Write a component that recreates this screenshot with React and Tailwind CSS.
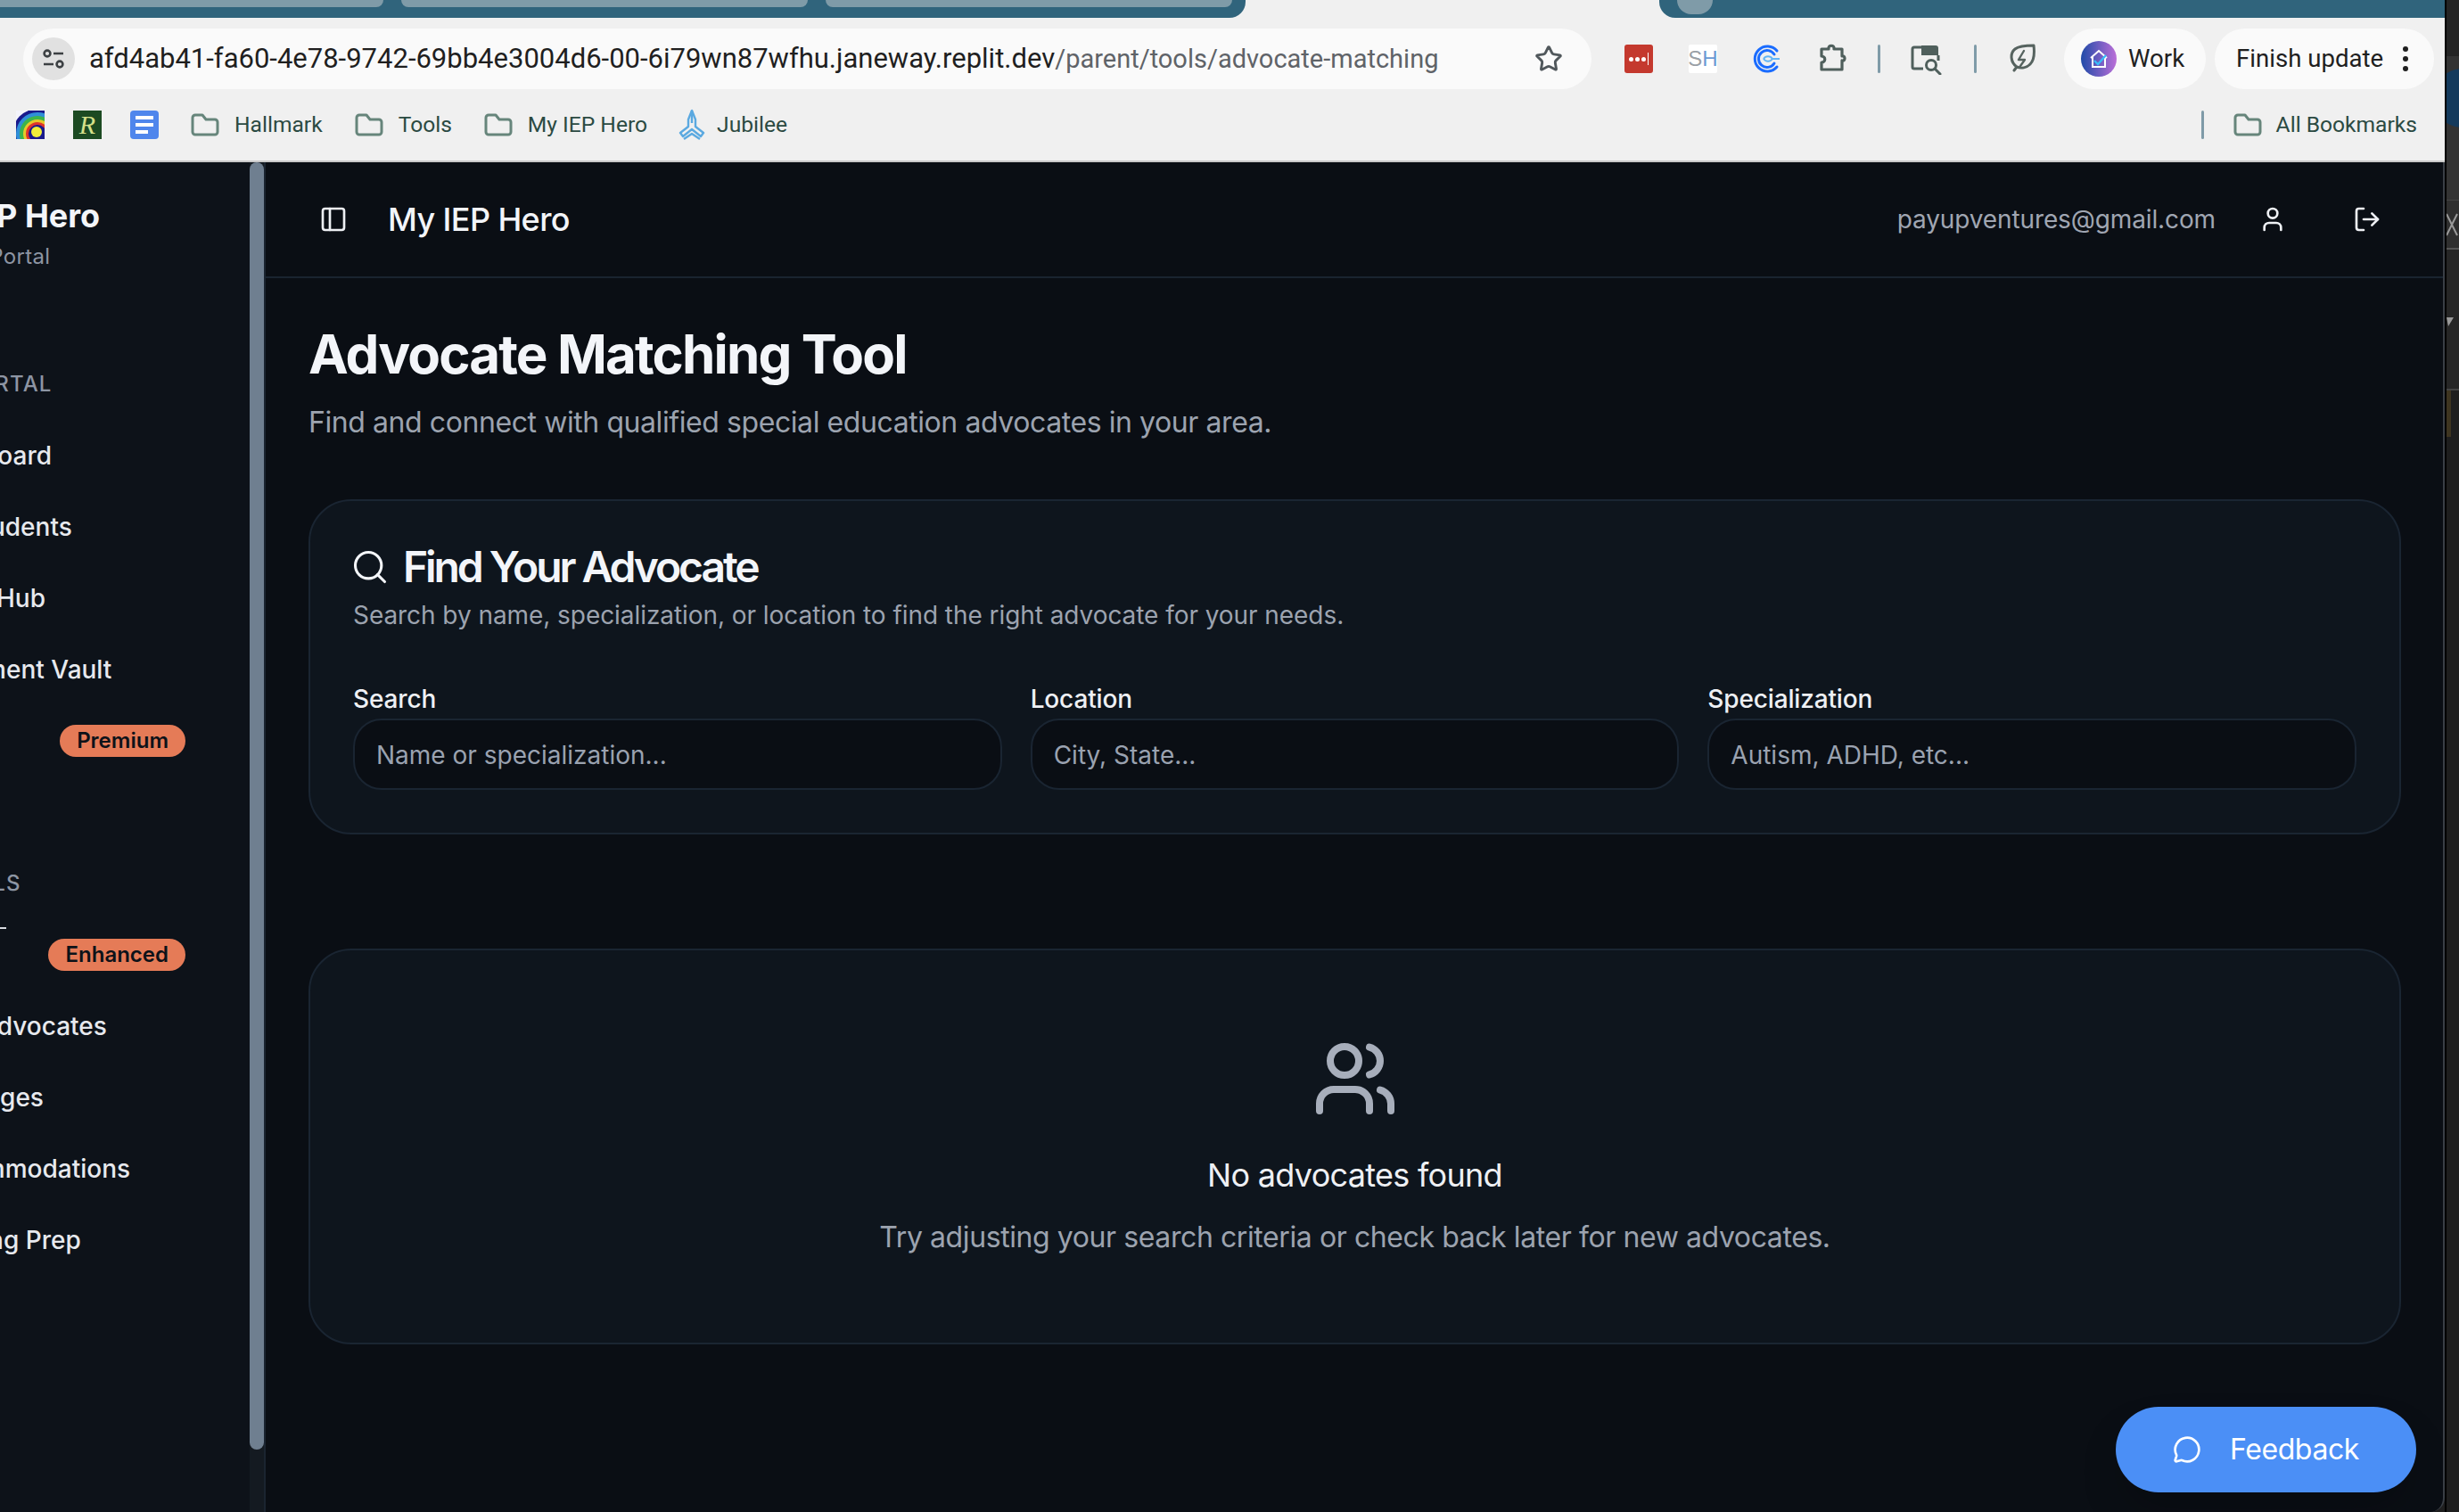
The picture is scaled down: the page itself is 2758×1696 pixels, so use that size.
import React from "react";
import { Search, Users, User, LogOut, PanelLeft, MessageCircle, Star } from "lucide-react";

const Folder = ({ className = "" }) => (
  <svg viewBox="0 0 32 26" className={`w-[32px] h-[26px] ${className}`} fill="none" stroke="#66857b" strokeWidth="3" strokeLinejoin="round">
    <path d="M2 5a3 3 0 0 1 3-3h8l4 5h10a3 3 0 0 1 3 3v11a3 3 0 0 1-3 3H5a3 3 0 0 1-3-3Z" />
  </svg>
);

const Rainbow = () => (
  <svg viewBox="0 0 32 32" className="w-[32px] h-[32px]">
    <rect width="32" height="32" fill="#f4f4fb" />
    <circle cx="24" cy="26" r="28" fill="#1a1a8c" />
    <circle cx="24" cy="26" r="24" fill="#2f8fd8" />
    <circle cx="24" cy="26" r="20" fill="#3db44a" />
    <circle cx="24" cy="26" r="16" fill="#e8c92a" />
    <circle cx="24" cy="26" r="13" fill="#e0342b" />
    <circle cx="24" cy="26" r="10" fill="#1a1a8c" />
    <circle cx="23" cy="24" r="6" fill="#f2ee3a" />
  </svg>
);

const Docs = () => (
  <div className="w-[32px] h-[32px] bg-[#4f86ec] rounded-[4px] flex flex-col justify-center gap-[4px] px-[6px]">
    <div className="h-[4px] w-full bg-white" />
    <div className="h-[4px] w-full bg-white" />
    <div className="h-[4px] w-[14px] bg-white" />
  </div>
);

const Sep = ({ className = "" }) => <div className={`w-[3px] h-[32px] rounded-full bg-[#7f9ba8] ${className}`} />;

const Bookmark = ({ label, className = "" }) => (
  <div className={`flex items-center gap-[17px] ${className}`}>
    <Folder />
    <span>{label}</span>
  </div>
);

const NavRow = ({ label, badge, dash }) => (
  <div className="h-[80px] flex items-center justify-between text-[28px] font-medium text-[#e7e9ee]">
    {dash ? <div className="self-start mt-[9px] ml-[88px] h-[2px] w-[7px] bg-[#d8dbe0]" /> : null}
    <span className="whitespace-nowrap">{label}</span>
    {badge ? (
      <span className="rounded-full bg-[#e57b57] text-[#0d1219] text-[24px] leading-[36px] font-semibold px-[19px]">{badge}</span>
    ) : null}
  </div>
);

const Field = ({ label, placeholder }) => (
  <div className="flex flex-col gap-[8px]">
    <label className="text-[28px] leading-[28px] font-medium tracking-[-0.15px] text-[#eef0f4]">{label}</label>
    <div className="h-[80px] rounded-[32px] border-2 border-[#1a2532] bg-[#0a0e14] flex items-center pt-[2px] px-[24px] text-[28px] text-[#9aa2b0]">
      {placeholder}
    </div>
  </div>
);

export default function App() {
  return (
    <div className="w-[2758px] h-[1696px] flex overflow-hidden bg-[#1f1f1f] font-['Inter',sans-serif]">
      <div className="w-[2742px] h-full flex flex-col shrink-0">
        {/* Browser chrome */}
        <div className="h-[182px] shrink-0 bg-[#f0f0f0] border-b-2 border-[#c9c9c9] flex flex-col font-['Roboto',sans-serif]">
          <div className="h-[20px] flex">
            <div className="w-[1397px] h-full bg-[#30647c] rounded-br-[18px] flex gap-[20px]">
              <div className="w-[430px] h-[8px] bg-[#7f9ba8] rounded-br-[12px]" />
              <div className="w-[456px] h-[8px] bg-[#7f9ba8] rounded-b-[12px]" />
              <div className="w-[456px] h-[8px] bg-[#7f9ba8] rounded-b-[12px]" />
            </div>
            <div className="w-[464px] h-full" />
            <div className="flex-1 h-full bg-[#30647c] rounded-bl-[18px] pl-[20px]">
              <div className="w-[40px] h-[16px] bg-[#7f9ba8] rounded-b-full" />
            </div>
          </div>
          <div className="h-[80px] pt-[12px] pl-[26px] flex items-start">
            <div className="w-[1759px] h-[68px] rounded-full bg-[#fafafa] flex items-center pl-[10px] pr-[32px]">
              <div className="w-[48px] h-[48px] rounded-full bg-[#e1e1e1] flex items-center justify-center">
                <svg viewBox="0 0 28 28" className="w-[28px] h-[28px]" fill="none" stroke="#3c4043" strokeWidth="2.6">
                  <circle cx="7" cy="8" r="3.4" />
                  <path d="M14 8h11M3 20h11" />
                  <circle cx="21" cy="20" r="3.4" />
                </svg>
              </div>
              <div className="ml-[16px] text-[31px] text-[#1f1f1f] whitespace-nowrap">
                afd4ab41-fa60-4e78-9742-69bb4e3004d6-00-6i79wn87wfhu.janeway.replit.dev
                <span className="text-[29px] text-[#5f6368]">/parent/tools/advocate-matching</span>
              </div>
              <Star className="ml-auto text-[#50575b]" size={32} strokeWidth={2.2} />
            </div>
            <div className="ml-[37px] mt-[18px] w-[32px] h-[32px] rounded-[3px] bg-[#c4392e] flex items-center justify-center gap-[2px]">
              <div className="w-[5px] h-[5px] rounded-full bg-white" />
              <div className="w-[5px] h-[5px] rounded-full bg-white" />
              <div className="w-[5px] h-[5px] rounded-full bg-white" />
              <div className="w-[1px] h-[14px] bg-white" />
            </div>
            <div className="ml-[40px] mt-[18px] w-[32px] h-[32px] bg-white rounded-[2px] flex items-center justify-center text-[24px] leading-none font-['Liberation_Sans',sans-serif]">
              <span className="text-[#9aa0a6]">S</span>
              <span className="text-[#6a9ad4]">H</span>
            </div>
            <svg viewBox="0 0 32 32" className="ml-[40px] mt-[18px] w-[32px] h-[32px]" fill="none">
              <path d="M27 7a14 14 0 1 0 0 18" stroke="#1a6cff" strokeWidth="3" strokeLinecap="round" />
              <path d="M24 11a9.5 9.5 0 1 0 0 10" stroke="#1a6cff" strokeWidth="3" strokeLinecap="round" />
              <path d="M30 16h-8a6 6 0 0 0-10 0" stroke="#62b5f5" strokeWidth="2" />
              <path d="M30 16h-8a6 6 0 0 1-10 0" stroke="#62b5f5" strokeWidth="2" />
            </svg>
            <svg viewBox="0 0 32 32" className="ml-[42px] mt-[16px] w-[32px] h-[32px]" fill="none" stroke="#4f5f5c" strokeWidth="3.2" strokeLinejoin="round">
              <path d="M3 7h8c-1-5 7-5 6 0h9v8c4-1 4 6 0 5v10H3v-8c5 0 5-7 0-7Z" />
            </svg>
            <Sep className="ml-[34px] mt-[18px]" />
            <svg viewBox="0 0 36 34" className="ml-[34px] mt-[18px] w-[36px] h-[34px]" fill="none">
              <path d="M12 3H4a2 2 0 0 0-2 2v20a2 2 0 0 0 2 2h10" stroke="#4f5f5c" strokeWidth="3" />
              <path d="M12 1h16a3 3 0 0 1 3 3v8H12Z" fill="#4f5f5c" />
              <path d="M31 12v6" stroke="#4f5f5c" strokeWidth="3" />
              <circle cx="23" cy="23" r="5.5" stroke="#4f5f5c" strokeWidth="3" />
              <path d="M27 27l6 6" stroke="#4f5f5c" strokeWidth="3" strokeLinecap="round" />
            </svg>
            <Sep className="ml-[35px] mt-[18px]" />
            <svg viewBox="0 0 30 34" className="ml-[36px] mt-[16px] w-[30px] h-[34px]" fill="none" stroke="#56635f" strokeWidth="3" strokeLinejoin="round" strokeLinecap="round">
              <path d="M6 31l3-4C2 22 1 12 7 7c5-4 14-4 21-4 1 8 1 16-4 21-4 4-10 5-15 3" />
              <path d="M17 9l-6 10h7l-5 7" strokeWidth="2.4" />
            </svg>
            <div className="ml-[32px] w-[159px] h-[68px] rounded-full bg-[#fafafa] flex items-center pl-[19px] gap-[13px]">
              <svg viewBox="0 0 40 40" className="w-[40px] h-[40px]">
                <defs>
                  <linearGradient id="workG" x1="0" y1="0" x2="1" y2="0">
                    <stop offset="0" stopColor="#1f4aa8" />
                    <stop offset="1" stopColor="#bb6fd8" />
                  </linearGradient>
                </defs>
                <circle cx="20" cy="20" r="20" fill="url(#workG)" />
                <path d="M11 19l9-8 9 8M13 18v11h14V18" fill="none" stroke="#fff" strokeWidth="2" />
                <path d="M15 22l4 4 9-10" fill="none" stroke="#38bdf8" strokeWidth="2.4" />
              </svg>
              <span className="text-[27.6px] text-[#1f1f1f]">Work</span>
            </div>
            <div className="ml-[10px] w-[246px] h-[68px] rounded-full bg-[#fafafa] flex items-center pl-[24px] text-[27.6px] text-[#1f1f1f]">
              <span className="whitespace-nowrap">Finish update</span>
              <div className="ml-[22px] flex flex-col gap-[5px]">
                <div className="w-[6px] h-[6px] rounded-full bg-[#1f1f1f]" />
                <div className="w-[6px] h-[6px] rounded-full bg-[#1f1f1f]" />
                <div className="w-[6px] h-[6px] rounded-full bg-[#1f1f1f]" />
              </div>
            </div>
          </div>
          <div className="flex-1 flex items-center pl-[18px] text-[24.6px] text-[#2b4a42]">
            <Rainbow />
            <div className="ml-[32px] w-[32px] h-[32px] bg-[#1c4a22] flex items-center justify-center text-[#d6e08a] text-[30px] leading-none italic font-['Liberation_Serif',serif]">R</div>
            <div className="ml-[32px]"><Docs /></div>
            <Bookmark label="Hallmark" className="ml-[36px]" />
            <Bookmark label="Tools" className="ml-[36px]" />
            <Bookmark label="My IEP Hero" className="ml-[36px]" />
            <div className="ml-[35px] flex items-center gap-[13px]">
              <svg viewBox="0 0 30 36" className="w-[30px] h-[36px]" fill="none" stroke="#5ba9e0" strokeWidth="2.4" strokeLinejoin="round">
                <path d="M15 2l-4 10v8L2 27l3 4 10-8 10 8 3-4-9-7v-8Z" />
                <path d="M15 2v14M6 34l9-6 9 6" />
              </svg>
              <span>Jubilee</span>
            </div>
            <div className="ml-auto flex items-center">
              <Sep />
              <Folder className="ml-[33px]" />
              <span className="ml-[16px] mr-[31px]">All Bookmarks</span>
            </div>
          </div>
        </div>

        {/* Page */}
        <div className="flex-1 min-h-0 flex relative">
          <aside className="w-[298px] shrink-0 flex bg-[#0d1219] border-r-2 border-[#1a2430]">
            <div className="w-[280px] overflow-hidden">
              <div className="w-[296px] -ml-[88px] pt-[38px]">
                <div className="-ml-[12px] text-[36px] leading-[44px] font-bold text-[#f3f5f9] whitespace-nowrap">My IEP Hero</div>
                <div className="mt-[8px] -ml-[6px] text-[24px] leading-[32px] tracking-[0.3px] text-[#8d95a3] whitespace-nowrap">Parent Portal</div>
                <div className="mt-[111px] -ml-[2px] text-[24px] leading-[32px] font-medium tracking-[1.1px] text-[#8d95a3] whitespace-nowrap">MY PORTAL</div>
                <div className="mt-[24px]">
                  <NavRow label="Dashboard" />
                  <NavRow label="My Students" />
                  <NavRow label="Learn Hub" />
                  <NavRow label="Document Vault" />
                  <NavRow label="Plans" badge="Premium" />
                </div>
                <div className="mt-[104px] -ml-[8px] text-[24px] leading-[32px] font-medium tracking-[1.1px] text-[#8d95a3] whitespace-nowrap">AI TOOLS</div>
                <div className="mt-[24px]">
                  <NavRow dash badge="Enhanced" />
                  <NavRow label="Find Advocates" />
                  <NavRow label="Messages" />
                  <NavRow label="Accommodations" />
                  <NavRow label="Meeting Prep" />
                </div>
              </div>
            </div>
            <div className="w-[16px] bg-[#141a21]">
              <div className="h-[1444px] w-full rounded-b-[8px] rounded-t-[8px] bg-[#6f7f90]" />
            </div>
          </aside>

          <div className="flex-1 min-w-0 bg-[#0a0e14] border-r-2 border-[#3a3f46] rounded-br-[16px] flex flex-col">
            <header className="h-[130px] shrink-0 border-b-2 border-[#1a2430] flex items-center pl-[60px] pr-[69px] text-[#eef0f4]">
              <PanelLeft size={32} strokeWidth={2} />
              <span className="ml-[45px] text-[36px] font-medium tracking-[-0.6px] text-[#f3f5f9]">My IEP Hero</span>
              <span className="ml-auto text-[28px] tracking-[-0.12px] text-[#a0a6b2]">payupventures@gmail.com</span>
              <User className="ml-[48px]" size={32} strokeWidth={2} />
              <LogOut className="ml-[74px]" size={32} strokeWidth={2} />
            </header>
            <main className="pl-[48px] pr-[47px] pt-[49px]">
              <h1 className="text-[60px] leading-[72px] font-bold tracking-[-1.85px] text-[#f3f5f9]">Advocate Matching Tool</h1>
              <p className="mt-[17px] text-[32px] leading-[48px] tracking-[-0.42px] text-[#9ca3af]">Find and connect with qualified special education advocates in your area.</p>

              <section className="mt-[62px] rounded-[48px] border-2 border-[#1a2532] bg-[#0e151d] p-[48px]">
                <div className="flex items-center gap-[15px] -ml-[3px]">
                  <Search className="text-[#f3f5f9]" size={44} strokeWidth={1.7} />
                  <h2 className="text-[48px] leading-[52px] font-semibold tracking-[-3.1px] text-[#f3f5f9]">Find Your Advocate</h2>
                </div>
                <p className="mt-[8px] text-[28px] leading-[40px] tracking-[-0.06px] text-[#9ca3af]">Search by name, specialization, or location to find the right advocate for your needs.</p>
                <div className="mt-[60px] grid grid-cols-3 gap-[32px]">
                  <Field label="Search" placeholder="Name or specialization..." />
                  <Field label="Location" placeholder="City, State..." />
                  <Field label="Specialization" placeholder="Autism, ADHD, etc..." />
                </div>
              </section>

              <section className="mt-[128px] rounded-[48px] border-2 border-[#1a2532] bg-[#0e151d] pt-[96px] pb-[94px] flex flex-col items-center">
                <Users className="text-[#a7aebb]" size={96} strokeWidth={2} />
                <h3 className="mt-[32px] text-[36px] leading-[56px] font-normal tracking-[-0.7px] text-[#eef0f4]">No advocates found</h3>
                <p className="mt-[18px] text-[32px] leading-[48px] tracking-[-0.41px] text-[#9ca3af]">Try adjusting your search criteria or check back later for new advocates.</p>
              </section>
            </main>
          </div>

          <button className="absolute right-[32px] bottom-[22px] h-[96px] rounded-full bg-[#4b8ff6] pl-[64px] pr-[64px] flex items-center gap-[32px] text-[32px] font-normal tracking-[-0.4px] text-white shadow-2xl">
            <MessageCircle size={32} strokeWidth={2} />
            <span>Feedback</span>
          </button>
        </div>
      </div>

      {/* Sliver of the desktop behind the window */}
      <div className="flex-1 h-full border-l-2 border-black overflow-hidden">
        <svg viewBox="0 0 14 1696" className="w-[14px] h-[1696px]">
          <rect width="14" height="1696" fill="#1e1e1e" />
          <rect width="14" height="63" fill="#242424" />
          <rect y="63" width="14" height="162" fill="#333333" />
          <circle cx="18" cy="110" r="33" fill="#143a5c" />
          <rect y="225" width="14" height="54" fill="#2f2f2f" />
          <rect y="278" width="14" height="2" fill="#555555" />
          <rect y="224" width="14" height="1" fill="#444444" />
          <path d="M0 240l12 24M12 240L0 264" stroke="#9a9a9a" strokeWidth="2" />
          <rect y="280" width="14" height="156" fill="#262626" />
          <path d="M0 356h8l-6 10Z" fill="#9a9a9a" />
          <rect y="436" width="14" height="2" fill="#444444" />
          <rect y="438" width="5" height="52" fill="#3e3520" />
        </svg>
      </div>
    </div>
  );
}
